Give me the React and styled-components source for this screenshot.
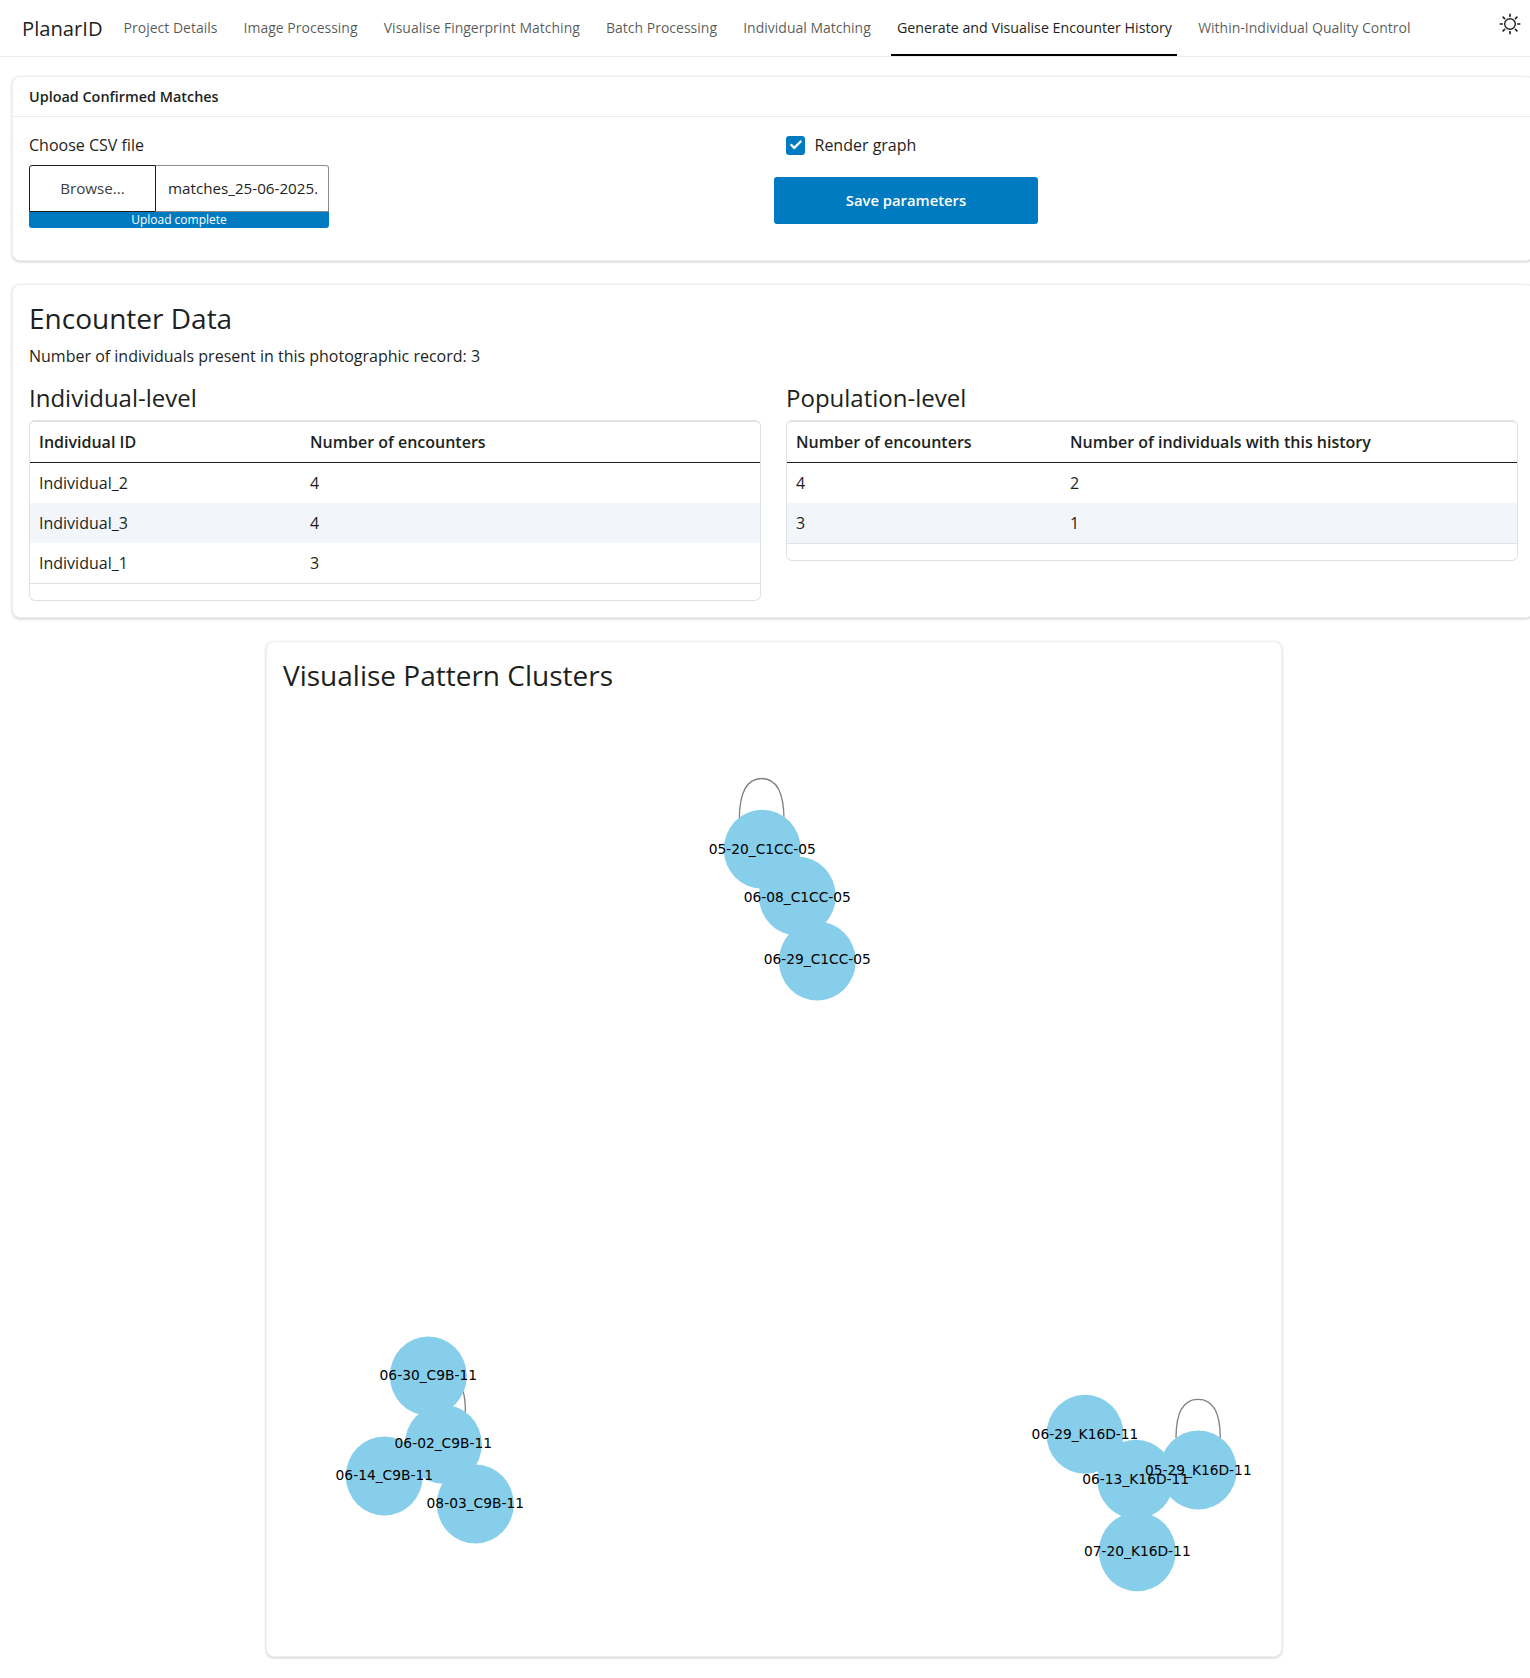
import React from "react";
import styled, { createGlobalStyle } from "styled-components";
import { Check } from "lucide-react";

const Global = createGlobalStyle`
  html, body { margin: 0; padding: 0; background: #fff; overflow-x: hidden; }
  * { box-sizing: border-box; }
  body { font-family: "Open Sans", sans-serif; color: #1d1f21; font-size: 16px; line-height: 24px; }
`;

const Nav = styled.nav`
  display: flex; align-items: stretch; height: 57px; padding-left: 22px;
  border-bottom: 1px solid #e9ecef;
`;
const Brand = styled.div`
  font-size: 20.2px; line-height: 56px; margin-right: 15.5px; color: #1d1f21;
`;
const Links = styled.div`display: flex; gap: 15.2px;`;
const NavLink = styled.a`
  display: block; padding: 0 5.5px; line-height: 56px; height: 56px;
  font-size: ${p => (p.$active ? "14.23px" : "14px")};
  color: ${p => (p.$active ? "#1d1f21" : "rgba(29,31,33,.75)")};
  border-bottom: 2px solid ${p => (p.$active ? "#000" : "transparent")};
`;
const SunWrap = styled.div`
  margin-left: auto; width: 40px; height: 47px; display: flex; align-items: center; justify-content: center;
`;

const Main = styled.main`padding: 19px 0 20px 12px; width: 1534px;`;
const Card = styled.section`
  width: 1522px; background: #fff; border: 1px solid #eff0f1; border-radius: 8px;
  box-shadow: 0 1px 3px rgba(0,0,0,.2);
  & + & { margin-top: 23px; }
`;
const CardHeader = styled.header`
  height: 40px; padding: 0 16px; border-bottom: 1px solid #e9ecef;
  font-size: 14.4px; font-weight: 600; line-height: 39px;
`;
const CardBody = styled.div`
  display: grid; grid-template-columns: 745px 1fr; padding: 16px 16px 32px; height: 143px;
`;
const FieldLabel = styled.label`display: block; margin-bottom: 8px;`;
const FileGroup = styled.div`display: flex; width: 300px; height: 47px;`;
const BrowseBtn = styled.div`
  width: 127px; padding-bottom: 2px; border: 1px solid #1d1f21; border-radius: 3px 0 0 0;
  display: flex; align-items: center; justify-content: center; font-size: 15.2px; color: #3c3e40;
`;
const FileName = styled.div`
  flex: 1; min-width: 0; border: 1px solid #8a8c8e; border-left: 0; border-radius: 0 3px 0 0;
  padding: 0 11px 0 12px; font-size: 15.2px; line-height: 45px;
`;
const FileNameClip = styled.div`overflow: hidden; white-space: nowrap;`;
const Progress = styled.div`
  width: 300px; height: 16px; background: #007bc2; border-radius: 0 0 3px 3px;
  color: #fff; font-size: 12px; line-height: 16px; text-align: center;
`;
const CheckRow = styled.div`display: flex; align-items: center; gap: 9.5px; padding-left: 12px; height: 24px; margin-bottom: 20px;`;
const CheckBox = styled.span`
  width: 19px; height: 19px; border-radius: 3px; background: #007bc2; color: #fff;
  display: flex; align-items: center; justify-content: center;
`;
const SaveBtn = styled.button`
  display: block; width: 264px; height: 47px; border: 0; border-radius: 3px; background: #007bc2; color: #fff;
  font: 600 14.8px/47px "Open Sans", sans-serif; text-align: center; padding: 0;
`;

const EncounterBody = styled.div`padding: 16px 16px 16px;`;
const H2 = styled.h2`margin: 0 0 9px; font-size: 28px; line-height: 34px; font-weight: 400;`;
const Para = styled.p`margin: 0 0 15px;`;
const TableGrid = styled.div`display: grid; grid-template-columns: 732px 732px; column-gap: 25px; align-items: start;`;
const H3 = styled.h3`margin: 0 0 8px; font-size: 24px; line-height: 29px; font-weight: 400;`;
const TableBox = styled.div`
  border: 1px solid #dee2e6; border-top-width: 2px; border-radius: 6px; padding-bottom: 16px; overflow: hidden;
`;
const Row = styled.div`
  display: grid; grid-template-columns: ${p => p.$first}px 1fr; height: ${p => (p.$head ? 41 : 40)}px;
  background: ${p => (p.$striped ? "#f2f6fa" : "#fff")};
  border-bottom: ${p => (p.$head ? "1px solid #1d1f21" : "none")};
  &:last-child { height: 41px; border-bottom: 1px solid #dee2e6; }
`;
const Cell = styled.div`
  padding: 0 9px; line-height: 40px; font-weight: ${p => (p.$head ? 600 : 400)}; font-size: 16px;
`;

const GraphCard = styled(Card)`
  width: 1016px; margin-left: 254px; padding: 16px; 
  && { margin-top: 23px; }
`;
const GraphTitle = styled.h2`margin: 0 0 7px; font-size: 28px; line-height: 34px; font-weight: 400;`;
const GraphSvg = styled.svg`display: block; width: 982px; height: 941px;`;
const Label = styled.text`
  font-family: "DejaVu Sans", sans-serif; font-size: 13.8px; fill: #000; text-anchor: middle; dominant-baseline: central;
`;

const nodes = [
  ["05-20_C1CC-05", 762.3, 849.3, 0],
  ["06-08_C1CC-05", 797.3, 896, 1],
  ["06-29_C1CC-05", 817.3, 961, -2],
  ["06-30_C9B-11", 428.3, 1376, -1],
  ["06-02_C9B-11", 443.3, 1444.3, -1],
  ["06-14_C9B-11", 384.3, 1476, -1],
  ["08-03_C9B-11", 475.3, 1504, -1],
  ["06-29_K16D-11", 1085, 1434.3, 0],
  ["06-13_K16D-11", 1135.7, 1479.3, 0],
  ["05-29_K16D-11", 1198.3, 1470, -0.5],
  ["07-20_K16D-11", 1137.3, 1551.7, -0.5],
];
const loops = [
  "M739.3 820C739.3 792 747 778.5 761.7 778.5C776.4 778.5 784 792 784 820",
  "M1176 1438C1176 1412 1183.5 1399.3 1198 1399.3C1212.5 1399.3 1220.3 1412 1220.3 1438",
  "M463 1391C465 1398 465.6 1405 465.3 1413",
];

const Sun = () => (
  <svg width="22" height="22" viewBox="0 0 22 22" fill="none" stroke="#1d1f21">
    <circle cx="11" cy="11" r="5.3" strokeWidth="1.4" />
    <g strokeWidth="1.6" strokeLinecap="round">
      <path d="M11 1.2V3.4M11 18.6V20.8M1.2 11H3.4M18.6 11H20.8M4.1 4.1L5.6 5.6M16.4 16.4L17.9 17.9M4.1 17.9L5.6 16.4M16.4 5.6L17.9 4.1" />
    </g>
  </svg>
);

const navItems = [
  "Project Details", "Image Processing", "Visualise Fingerprint Matching", "Batch Processing",
  "Individual Matching", "Generate and Visualise Encounter History", "Within-Individual Quality Control",
];

const DataTable = ({ first, head, rows }) => (
  <TableBox>
    <Row $first={first} $head>
      {head.map(h => <Cell key={h} $head>{h}</Cell>)}
    </Row>
    {rows.map((r, i) => (
      <Row key={i} $first={first} $striped={i % 2 === 1}>
        {r.map((c, j) => <Cell key={j}>{c}</Cell>)}
      </Row>
    ))}
  </TableBox>
);

export default function App() {
  return (
    <>
      <Global />
      <Nav>
        <Brand>PlanarID</Brand>
        <Links>
          {navItems.map(n => <NavLink key={n} $active={n.startsWith("Generate")}>{n}</NavLink>)}
        </Links>
        <SunWrap><Sun /></SunWrap>
      </Nav>
      <Main>
        <Card>
          <CardHeader>Upload Confirmed Matches</CardHeader>
          <CardBody>
            <div>
              <FieldLabel>Choose CSV file</FieldLabel>
              <FileGroup>
                <BrowseBtn>Browse...</BrowseBtn>
                <FileName><FileNameClip>matches_25-06-2025.csv</FileNameClip></FileName>
              </FileGroup>
              <Progress>Upload complete</Progress>
            </div>
            <div>
              <CheckRow>
                <CheckBox><Check size={14} strokeWidth={4} /></CheckBox>
                Render graph
              </CheckRow>
              <SaveBtn>Save parameters</SaveBtn>
            </div>
          </CardBody>
        </Card>
        <Card>
          <EncounterBody>
            <H2>Encounter Data</H2>
            <Para>Number of individuals present in this photographic record: 3</Para>
            <TableGrid>
              <div>
                <H3>Individual-level</H3>
                <DataTable first={271} head={["Individual ID", "Number of encounters"]}
                  rows={[["Individual_2", "4"], ["Individual_3", "4"], ["Individual_1", "3"]]} />
              </div>
              <div>
                <H3>Population-level</H3>
                <DataTable first={274} head={["Number of encounters", "Number of individuals with this history"]}
                  rows={[["4", "2"], ["3", "1"]]} />
              </div>
            </TableGrid>
          </EncounterBody>
        </Card>
        <GraphCard>
          <GraphTitle>Visualise Pattern Clusters</GraphTitle>
          <GraphSvg viewBox="283 699 982 941">
            {loops.map(d => <path key={d} d={d} fill="none" stroke="#808080" strokeWidth="1.3" />)}
            {nodes.map(([n, x, y]) => <ellipse key={n} cx={x} cy={y} rx="38.5" ry="39.5" fill="#87ceeb" />)}
            {nodes.map(([n, x, y, dy]) => <Label key={n} x={x} y={y + dy}>{n}</Label>)}
          </GraphSvg>
        </GraphCard>
      </Main>
    </>
  );
}
